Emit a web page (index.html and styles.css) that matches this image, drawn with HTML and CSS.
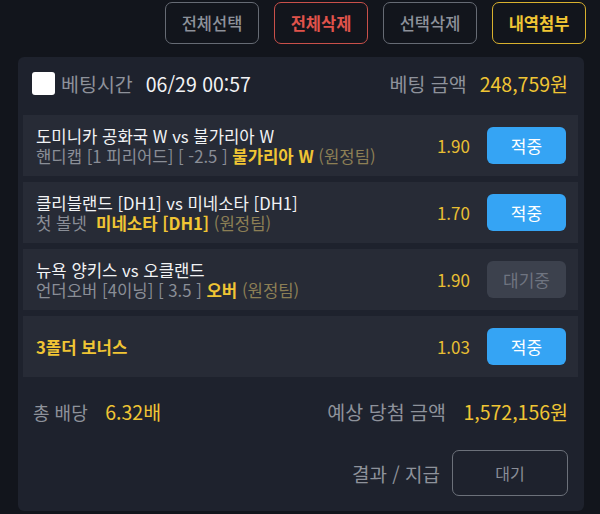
FILE: index.html
```html
<!DOCTYPE html>
<html lang="ko">
<head>
    <meta charset="UTF-8">
    <meta name="viewport" content="width=device-width, initial-scale=1.0">
    <title>베팅 내역</title>
    <link rel="stylesheet" href="styles.css">
</head>
<body>
<div class="toolbar">
    <button class="tool-btn">전체선택</button>
    <button class="tool-btn danger">전체삭제</button>
    <button class="tool-btn">선택삭제</button>
    <button class="tool-btn gold">내역첨부</button>
</div>
<div class="bet-card">
    <div class="bet-header">
        <div class="bet-time">
            <span class="check-box"></span>
            <span class="label">베팅시간</span>
            <span class="time">06/29 00:57</span>
        </div>
        <div class="bet-amount">
            <span class="label">베팅 금액</span>
            <span class="money">248,759원</span>
        </div>
    </div>
    <div class="pick-list">
        <div class="pick">
            <div class="pick-info">
                <div class="match">도미니카 공화국 W vs 불가리아 W</div>
                <div class="market">핸디캡 [1 피리어드] [ -2.5 ] <b>불가리아 W</b> <span class="side">(원정팀)</span></div>
            </div>
            <span class="odds">1.90</span>
            <span class="status win">적중</span>
        </div>
        <div class="pick">
            <div class="pick-info">
                <div class="match">클리블랜드 [DH1] vs 미네소타 [DH1]</div>
                <div class="market">첫 볼넷&nbsp; <b>미네소타 [DH1]</b> <span class="side">(원정팀)</span></div>
            </div>
            <span class="odds">1.70</span>
            <span class="status win">적중</span>
        </div>
        <div class="pick">
            <div class="pick-info">
                <div class="match">뉴욕 양키스 vs 오클랜드</div>
                <div class="market">언더오버 [4이닝] [ 3.5 ] <b>오버</b> <span class="side">(원정팀)</span></div>
            </div>
            <span class="odds">1.90</span>
            <span class="status wait">대기중</span>
        </div>
        <div class="pick">
            <div class="pick-info">
                <div class="bonus">3폴더 보너스</div>
            </div>
            <span class="odds">1.03</span>
            <span class="status win">적중</span>
        </div>
    </div>
    <div class="bet-total">
        <div>
            <span class="label">총 배당</span>
            <span class="money">6.32배</span>
        </div>
        <div>
            <span class="label wide">예상 당첨 금액</span>
            <span class="money">1,572,156원</span>
        </div>
    </div>
    <div class="bet-result">
        <span class="label">결과 / 지급</span>
        <span class="result-box">대기</span>
    </div>
</div>
</body>
</html>
```

FILE: styles.css
```css
body {
    font-family: "Noto Sans CJK KR", "Noto Sans", sans-serif;
    margin: 0;
    padding: 0;
    background-color: #12151c;
    color: #eceef2;
    height: 514px;
    overflow: hidden;
}
.toolbar {
    display: flex;
    justify-content: flex-end;
    gap: 15px;
    padding: 2px 14px 0 0;
}
.tool-btn {
    width: 94px;
    height: 42px;
    background: transparent;
    border: 1px solid #666b74;
    border-radius: 7px;
    color: #8d919a;
    font-family: inherit;
    font-size: 16.5px;
    font-weight: 500;
    padding: 0;
}
.tool-btn.danger {
    border-color: #c9504a;
    color: #e0534b;
    font-weight: 700;
}
.tool-btn.gold {
    border-color: #d8b02e;
    color: #f0c534;
    font-weight: 700;
}
.bet-card {
    margin: 13px 16px 0 18px;
    background: #1e222d;
    border-radius: 6px;
    padding: 14px 6px 15px 5px;
}
.bet-header {
    display: flex;
    justify-content: space-between;
    align-items: center;
    height: 24px;
    padding: 0 10px 0 9px;
    margin-bottom: 20px;
}
.bet-time, .bet-amount {
    display: flex;
    align-items: center;
}
.check-box {
    width: 23px;
    height: 23px;
    background: #fff;
    border-radius: 3px;
    margin-right: 6px;
}
.label {
    font-size: 18px;
    color: #8e929b;
}
.bet-header .label, .label.wide {
    font-size: 19.5px;
}
.time {
    font-size: 19.5px;
    color: #f2f3f5;
    margin-left: 13px;
}
.money {
    font-size: 19.5px;
    color: #f0c534;
    margin-left: 13px;
}
.pick-list {
    display: flex;
    flex-direction: column;
    gap: 6px;
}
.pick {
    display: flex;
    align-items: center;
    height: 61px;
    background: #272b36;
    padding: 0 12px 0 13px;
}
.pick-info {
    flex: 1;
    font-size: 16.7px;
    line-height: 20px;
}
.match {
    color: #f2f3f5;
}
.market {
    color: #8a8e97;
}
.market b, .bonus {
    color: #f0c534;
    font-weight: 700;
}
.side {
    color: #8c7f55;
}
.odds {
    font-size: 17px;
    color: #e8bf33;
    margin-right: 17px;
}
.status {
    width: 79px;
    height: 37px;
    border-radius: 6px;
    display: flex;
    align-items: center;
    justify-content: center;
    font-size: 17px;
}
.status.win {
    background: #35a4f4;
    color: #fff;
}
.status.wait {
    background: #3c414d;
    color: #6f7480;
}
.bet-total {
    display: flex;
    justify-content: space-between;
    align-items: center;
    height: 24px;
    padding: 0 10px 0 10px;
    margin-top: 22px;
}
.bet-result {
    display: flex;
    justify-content: flex-end;
    align-items: center;
    gap: 12px;
    padding-right: 10px;
    margin-top: 27px;
}
.bet-result .label {
    font-size: 19px;
}
.result-box {
    width: 114px;
    height: 44px;
    border: 1px solid #6c717a;
    border-radius: 7px;
    display: flex;
    align-items: center;
    justify-content: center;
    font-size: 16px;
    color: #8a8e97;
}
```
